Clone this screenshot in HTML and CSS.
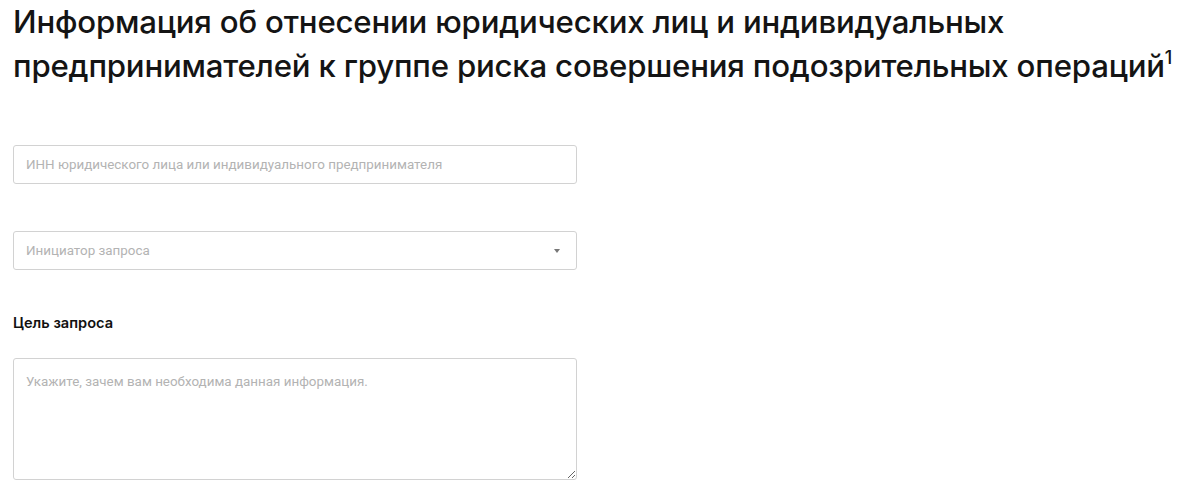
FILE: index.html
```html
<!DOCTYPE html>
<html lang="ru">
<head>
    <meta charset="UTF-8">
    <meta name="viewport" content="width=device-width, initial-scale=1.0">
    <title>Группа риска</title>
    <link rel="stylesheet" href="styles.css">
</head>
<body>
    <h1 class="page-title">Информация об отнесении юридических лиц и индивидуальных<br>предпринимателей к группе риска совершения подозрительных операций<sup>1</sup></h1>

    <form class="risk-form">
        <div class="field field-inn">
            <input type="text" class="control" placeholder="ИНН юридического лица или индивидуального предпринимателя">
        </div>

        <div class="field field-select">
            <div class="control select">
                <span class="select-placeholder">Инициатор запроса</span>
                <span class="select-arrow"></span>
            </div>
        </div>

        <div class="field field-goal">
            <label class="field-label">Цель запроса</label>
            <textarea class="control textarea" placeholder="Укажите, зачем вам необходима данная информация."></textarea>
        </div>
    </form>
</body>
</html>
```

FILE: styles.css
```css
body {
    margin: 0;
    padding: 0 13px;
    background: #fff;
    color: #111;
    font-family: Roboto, "Liberation Sans", sans-serif;
}
.page-title {
    margin: 0;
    white-space: nowrap;
    font-family: Inter, "Noto Sans", sans-serif;
    font-size: 31.2px;
    font-weight: 500;
    line-height: 44px;
    letter-spacing: -0.2px;
    color: #141414;
}
.page-title sup {
    font-size: 18px;
    line-height: 0;
    vertical-align: 13px;
}
.risk-form {
    width: 564px;
    padding-top: 57px;
}
.field {
    margin-bottom: 47px;
}
.field-select {
    margin-bottom: 43px;
}
.control {
    display: block;
    box-sizing: border-box;
    width: 100%;
    height: 39px;
    padding: 0 12px;
    border: 1px solid #d2d2d2;
    border-radius: 3px;
    background: #fff;
    font-family: Roboto, "Liberation Sans", sans-serif;
    font-size: 13.4px;
    color: #333;
    outline: none;
}
.control::placeholder {
    color: #b3b3b3;
}
.select {
    display: flex;
    align-items: center;
    justify-content: space-between;
    padding-right: 16px;
}
.select-placeholder {
    color: #b3b3b3;
}
.select-arrow {
    width: 0;
    height: 0;
    border-left: 3px solid transparent;
    border-right: 3px solid transparent;
    border-top: 4px solid #777;
}
.field-goal {
    margin-bottom: 0;
}
.field-label {
    display: block;
    margin-bottom: 25px;
    font-family: Inter, "Noto Sans", sans-serif;
    font-size: 14.6px;
    font-weight: 600;
    line-height: 20px;
    color: #111;
}
.textarea {
    height: 122px;
    padding: 14px 12px;
    resize: vertical;
    line-height: 18px;
}
```
